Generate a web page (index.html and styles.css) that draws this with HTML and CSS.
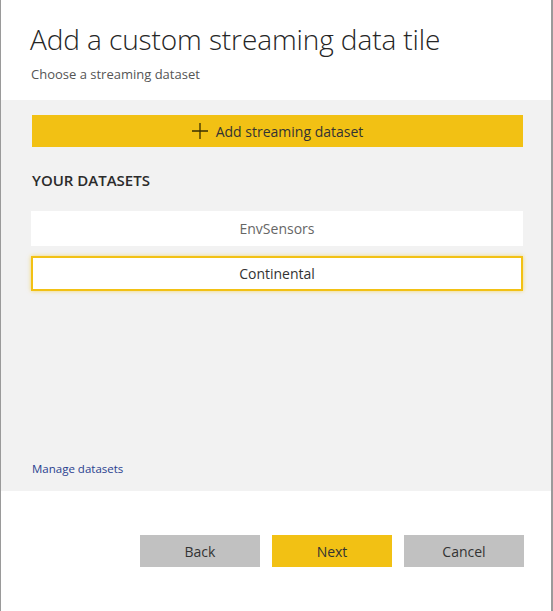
FILE: index.html
```html
<!DOCTYPE html>
<html>
<head>
<meta charset="utf-8">
<link rel="stylesheet" href="styles.css">
</head>
<body>
<div class="dialog">
  <header class="head">
    <h1 class="title">Add a custom streaming data tile</h1>
    <p class="subtitle">Choose a streaming dataset</p>
  </header>
  <section class="main">
    <button class="add-btn">
      <svg class="plus" width="16" height="16" viewBox="0 0 16 16"><path d="M8 0V16M0 8H16" stroke="#3a3000" stroke-width="1.3" fill="none"/></svg>
      <span>Add streaming dataset</span>
    </button>
    <h2 class="section-title">YOUR DATASETS</h2>
    <ul class="list">
      <li class="item">EnvSensors</li>
      <li class="item selected">Continental</li>
    </ul>
    <a class="manage" href="#">Manage datasets</a>
  </section>
  <footer class="foot">
    <button class="btn gray">Back</button>
    <button class="btn yellow">Next</button>
    <button class="btn gray">Cancel</button>
  </footer>
</div>
</body>
</html>
```
FILE: styles.css
```css
html, body {
  margin: 0;
  padding: 0;
}
body {
  background: #9a9a9a;
  width: 553px;
  height: 611px;
  overflow: hidden;
  font-family: "Open Sans", "Noto Sans", sans-serif;
}
.dialog {
  width: 550px;
  height: 611px;
  margin-left: 1px;
  background: #fff;
  display: flex;
  flex-direction: column;
}
.head {
  height: 100px;
  box-sizing: border-box;
  padding: 21px 0 0 29px;
}
.title {
  margin: 0;
  font-weight: 300;
  font-size: 28px;
  line-height: 36px;
  color: #252525;
  letter-spacing: -0.1px;
}
.subtitle {
  margin: 8px 0 0 1px;
  font-size: 13px;
  line-height: 18px;
  color: #555;
}
.main {
  height: 391px;
  box-sizing: border-box;
  background: #f2f2f2;
  padding: 15px 28px 0 30px;
  display: flex;
  flex-direction: column;
}
.add-btn {
  height: 32px;
  margin: 0 0 0 1px;
  border: none;
  background: #f2c114;
  display: flex;
  align-items: center;
  justify-content: center;
  gap: 8px;
  font-family: inherit;
  font-size: 14px;
  color: #333;
  padding: 0;
}
.section-title {
  margin: 23px 0 0 1px;
  font-size: 15px;
  font-weight: 600;
  line-height: 20px;
  color: #2b2b2b;
}
.list {
  list-style: none;
  margin: 21px 0 0 0;
  padding: 0;
  display: flex;
  flex-direction: column;
  gap: 10px;
}
.item {
  height: 35px;
  box-sizing: border-box;
  background: #fff;
  display: flex;
  align-items: center;
  justify-content: center;
  font-size: 14px;
  color: #666;
}
.item.selected {
  border: 2px solid #f2c114;
  box-shadow: 0 0 4px rgba(242, 193, 20, 0.6);
  color: #333;
}
.manage {
  margin-top: auto;
  margin-bottom: 14px;
  margin-left: 1px;
  font-size: 11.5px;
  line-height: 16px;
  color: #2a3f8f;
  text-decoration: none;
}
.foot {
  flex: 1;
  display: flex;
  justify-content: flex-end;
  align-items: flex-start;
  gap: 12px;
  padding: 44px 27px 0 0;
}
.btn {
  width: 120px;
  height: 32px;
  border: none;
  font-family: inherit;
  font-size: 14px;
  color: #333;
  padding: 0;
}
.btn.gray { background: #c1c1c1; }
.btn.yellow { background: #f2c114; }
```
